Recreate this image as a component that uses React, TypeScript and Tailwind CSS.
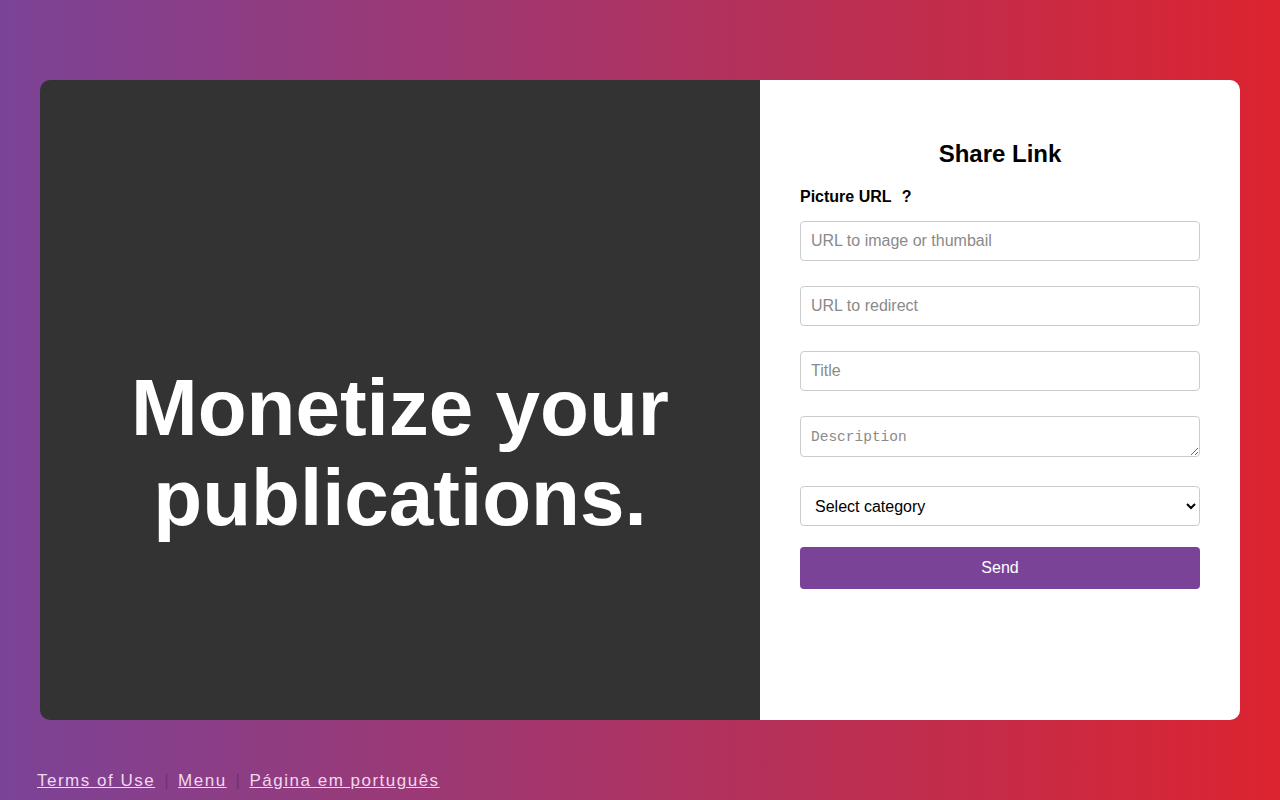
import React from "react";

export default function App() {
  const input =
    "w-full h-[40px] border border-[#cccccc] rounded-[4px] px-[10px] text-[16px] text-black placeholder:text-[#8a8a8a] bg-white outline-none";
  return (
    <div
      className="w-[1280px] h-[800px] overflow-hidden bg-[linear-gradient(to_right,#7b4397,#dc2430)] relative"
      style={{ fontFamily: '"Liberation Sans", Arial, sans-serif' }}
    >
      <div className="pt-[80px] px-[40px]">
        <div className="flex h-[640px] rounded-[10px] overflow-hidden">
          <div className="w-[720px] bg-[#333333] flex justify-center pt-[283px]">
            <h1 className="text-white font-bold text-[80px] leading-[90px] text-center">
              Monetize your
              <br />
              publications.
            </h1>
          </div>
          <div className="w-[480px] bg-white px-[40px] pt-[59px]">
            <h2 className="text-[24px] font-bold text-black text-center leading-[30px]">Share Link</h2>
            <div className="mt-[18px] text-[16px] font-bold text-black leading-[20px]">
              Picture URL <span className="ml-[6px]">?</span>
            </div>
            <input className={input + " mt-[14px]"} placeholder="URL to image or thumbail" />
            <input className={input + " mt-[25px]"} placeholder="URL to redirect" />
            <input className={input + " mt-[25px]"} placeholder="Title" />
            <textarea
              className="block w-full h-[41px] mt-[25px] border border-[#cccccc] rounded-[4px] px-[10px] pt-[11px] pb-0 text-[14.5px] leading-[18px] placeholder:text-[#8a8a8a] bg-white outline-none"
              style={{ fontFamily: '"Liberation Mono", monospace' }}
              placeholder="Description"
            />
            <select className="block w-full h-[40px] mt-[29px] border border-[#cccccc] rounded-[4px] pl-[10px] pr-[6px] text-[16px] text-black bg-white">
              <option>Select category</option>
            </select>
            <button className="block w-full h-[42px] mt-[21px] bg-[#7b4397] text-white text-[16px] rounded-[4px]">
              Send
            </button>
          </div>
        </div>
      </div>
      <div className="absolute left-[37px] top-[768px] flex items-center text-[17px] tracking-[1.5px] text-[#f0d8ee]">
        <a className="underline">Terms of Use</a>
        <span className="ml-[9px] mr-[8px] text-[#5a2a5a]/60">|</span>
        <a className="underline">Menu</a>
        <span className="ml-[9px] mr-[8px] text-[#5a2a4a]/60">|</span>
        <a className="underline">Página em português</a>
      </div>
    </div>
  );
}
